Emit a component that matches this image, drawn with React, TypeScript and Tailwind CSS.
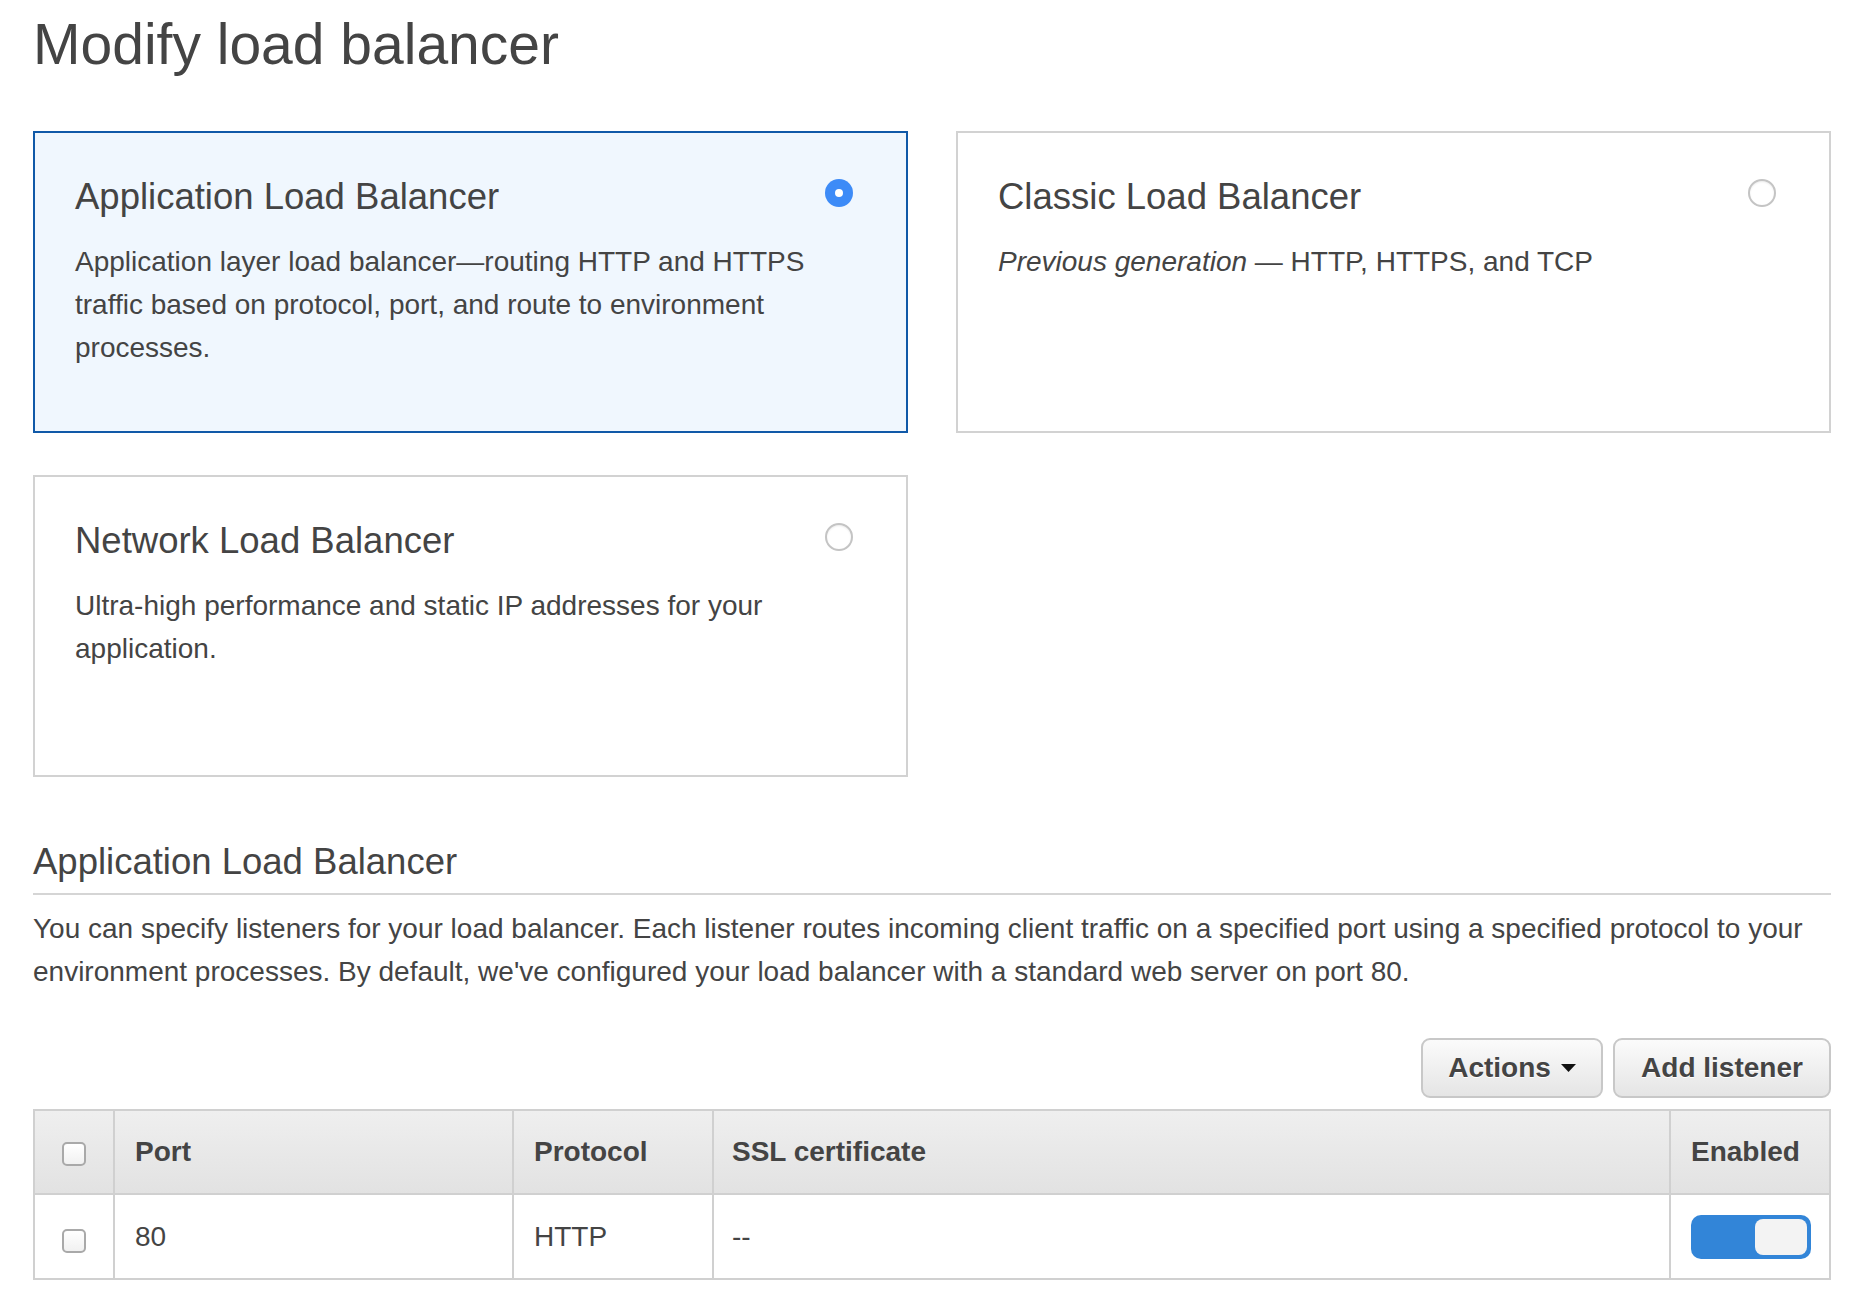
import React from 'react';

type Balancer = {
  id: string;
  title: string;
  description: React.ReactNode;
};

const balancers: Balancer[] = [
  {
    id: 'application',
    title: 'Application Load Balancer',
    description:
      'Application layer load balancer\u2014routing HTTP and HTTPS traffic based on protocol, port, and route to environment processes.',
  },
  {
    id: 'classic',
    title: 'Classic Load Balancer',
    description: (
      <>
        <em>Previous generation</em> &mdash; HTTP, HTTPS, and TCP
      </>
    ),
  },
  {
    id: 'network',
    title: 'Network Load Balancer',
    description: 'Ultra-high performance and static IP addresses for your application.',
  },
];

const Radio = ({ checked }: { checked: boolean }) =>
  checked ? (
    <span className="mt-[2px] mr-[13px] flex h-[28px] w-[28px] shrink-0 items-center justify-center rounded-full bg-[#3d8bf7]">
      <span className="h-[8px] w-[8px] rounded-full bg-white" />
    </span>
  ) : (
    <span className="mt-[2px] mr-[13px] h-[28px] w-[28px] shrink-0 rounded-full border-2 border-[#c4c4c4] bg-white shadow-[inset_0_1px_2px_rgba(0,0,0,0.08)]" />
  );

const Checkbox = () => (
  <span className="inline-block h-[24px] w-[24px] rounded-[5px] border-2 border-[#a9a9a9] bg-linear-to-b from-white to-[#f1f1f1] align-middle" />
);

const Caret = () => (
  <svg width="15" height="8" viewBox="0 0 15 8" className="ml-[10px]">
    <path d="M0 0 L15 0 L7.5 8 Z" fill="#111" />
  </svg>
);

export default function App() {
  const selected = 'application';

  return (
    <div className="min-h-screen bg-white px-[33px] pt-[12px] pb-[40px] font-['Liberation_Sans',Arial,sans-serif] text-[#444]">
      <h1 className="text-[57px] leading-[64px]">Modify load balancer</h1>

      {/* Load balancer type cards */}
      <div className="mt-[55px] grid grid-cols-2 gap-x-[48px] gap-y-[42px]">
        {balancers.map(b => {
          const isSel = b.id === selected;
          return (
            <div
              key={b.id}
              className={`h-[302px] border-2 pt-[44px] pl-[40px] pr-[40px] ${
                isSel ? 'border-[#1059a8] bg-[#f0f7fe]' : 'border-[#d2d2d2] bg-white'
              }`}
            >
              <div className="flex items-start justify-between">
                <div className="text-[36.5px] leading-[40px]">{b.title}</div>
                <Radio checked={isSel} />
              </div>
              <div className="mt-[23px] text-[28px] leading-[43px]">{b.description}</div>
            </div>
          );
        })}
      </div>

      {/* Listeners */}
      <div className="mt-[65px]">
        <h2 className="border-b-2 border-[#d5d5d5] pb-[11px] text-[36.5px] leading-[40px]">
          Application Load Balancer
        </h2>
        <p className="mt-[13px] text-[28px] leading-[42.5px]">
          You can specify listeners for your load balancer. Each listener routes incoming client traffic on a
          specified port using a specified protocol to your environment processes. By default, we've configured
          your load balancer with a standard web server on port 80.
        </p>

        <div className="mt-[45px] flex justify-end gap-[10px]">
          <button className="flex h-[60px] w-[182px] items-center justify-center rounded-[9px] border-2 border-[#c8c8c8] bg-linear-to-b from-[#fbfbfb] to-[#e5e5e5] text-[28px] font-bold text-[#444] [text-shadow:0_1px_0_#fff]">
            Actions
            <Caret />
          </button>
          <button className="flex h-[60px] w-[218px] items-center justify-center rounded-[9px] border-2 border-[#c8c8c8] bg-linear-to-b from-[#fbfbfb] to-[#e5e5e5] text-[28px] font-bold text-[#444] [text-shadow:0_1px_0_#fff]">
            Add listener
          </button>
        </div>

        <table className="mt-[11px] w-full table-fixed border-collapse border-2 border-[#d0d0d0] text-[28px]">
          <colgroup>
            <col className="w-[80px]" />
            <col className="w-[399px]" />
            <col className="w-[200px]" />
            <col />
            <col className="w-[160px]" />
          </colgroup>
          <thead>
            <tr className="h-[84px] bg-linear-to-b from-[#efefef] to-[#e2e2e2] text-left font-bold">
              <th className="border-2 border-[#d0d0d0] text-center">
                <Checkbox />
              </th>
              <th className="border-2 border-[#d0d0d0] px-[20px]">Port</th>
              <th className="border-2 border-[#d0d0d0] px-[20px]">Protocol</th>
              <th className="border-2 border-[#d0d0d0] px-[18px]">SSL certificate</th>
              <th className="border-2 border-[#d0d0d0] px-[20px]">Enabled</th>
            </tr>
          </thead>
          <tbody>
            <tr className="h-[85px] bg-white">
              <td className="border-2 border-[#d0d0d0] pt-[6px] text-center">
                <Checkbox />
              </td>
              <td className="border-2 border-[#d0d0d0] px-[20px]">80</td>
              <td className="border-2 border-[#d0d0d0] px-[20px]">HTTP</td>
              <td className="border-2 border-[#d0d0d0] px-[18px]">--</td>
              <td className="border-2 border-[#d0d0d0] px-[20px]">
                <div className="flex h-[44px] w-[120px] items-center justify-end rounded-[10px] bg-[#3285d8] p-[4px]">
                  <div className="h-[36px] w-[52px] rounded-[8px] bg-[#f3f3f3]" />
                </div>
              </td>
            </tr>
          </tbody>
        </table>
      </div>
    </div>
  );
}
